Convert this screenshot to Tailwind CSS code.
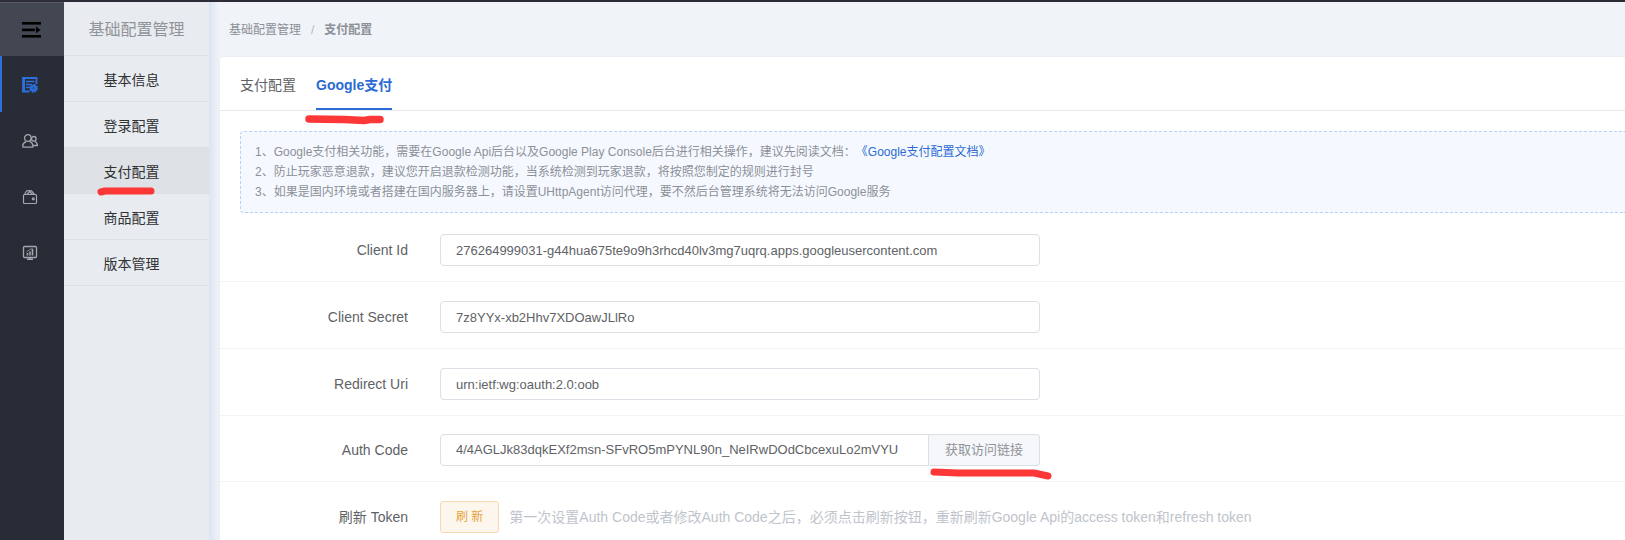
<!DOCTYPE html>
<html lang="zh-CN">
<head>
  <meta charset="UTF-8" />
  <meta name="viewport" content="width=device-width, initial-scale=1.0"/>
  <title>支付配置</title>
  <script src="https://cdn.jsdelivr.net/npm/@tailwindcss/browser@4"></script>
  <style>
    body {
      font-family: 'Liberation Sans', 'Noto Sans CJK SC', sans-serif;
      text-spacing-trim: space-all;
    }
  </style>
</head>
<body class="bg-[#f0f3f8] text-sm text-[#606266]">
  <div class="flex h-screen flex-col overflow-hidden">
    <div class="h-[2px] shrink-0 bg-[#2c2c38]"></div>

    <div class="flex min-h-0 flex-1">
      <!-- icon bar -->
      <nav class="flex w-16 shrink-0 flex-col bg-[#282c36]">
        <button type="button" aria-label="折叠菜单" class="flex h-[54px] items-center justify-center border-t border-[#565a66] bg-[#434751] text-black">
          <svg class="h-4 w-5" viewBox="0 0 20 16" fill="currentColor">
            <rect x="0" y="0" width="19" height="2.600"/>
            <rect x="0" y="6.600" width="13" height="2.600"/>
            <rect x="0" y="13" width="19" height="2.600"/>
            <path d="M14 4.500L18.500 7.900L14 11.300Z"/>
          </svg>
        </button>
        <a href="#" aria-label="基础配置管理" class="flex h-14 items-center justify-center border-l-2 border-[#2d6fdc] pt-0.5 pr-1.5 text-[#2d6fdc]">
          <svg class="h-4 w-4" viewBox="0 0 16 16" fill="none" stroke="currentColor">
            <path d="M14.500 7V1H1V14.500H7.500" stroke-width="1.800"/>
            <path d="M2 1V14.500" stroke-width="2"/>
            <path d="M4 4.500H12.500M4 7.500H9M4 10.500H7" stroke-width="1.500"/>
            <circle cx="11.500" cy="11.300" r="3.200" fill="currentColor" stroke-width="1"/>
            <circle cx="11.500" cy="11.300" r="3.900" stroke-width="1.400" stroke-dasharray="1.600 1.460"/>
            <circle cx="11.500" cy="11.300" r="1" stroke="#282c36" stroke-width=".4"/>
          </svg>
        </a>
        <a href="#" aria-label="用户管理" class="flex h-14 items-center justify-center pt-0.5 pr-1 text-[#a3a6ad]">
          <svg class="h-4 w-4" viewBox="0 0 16 16" fill="none" stroke="currentColor" stroke-width="1.300">
            <circle cx="5.800" cy="5" r="3.300"/>
            <path d="M.8 14.200V12.500C.8 10.500 2.500 9.300 4.300 8.400M7.600 8.400C9.400 9.300 10.800 10.500 10.800 12.500V14.200H.6"/>
            <circle cx="11.800" cy="5.800" r="2.300"/>
            <path d="M12.800 8.300C14.600 9 15.400 10.200 15.400 12.500H11"/>
          </svg>
        </a>
        <a href="#" aria-label="订单管理" class="flex h-14 items-center justify-center pt-0.5 pr-1 text-[#a3a6ad]">
          <svg class="h-4 w-4" viewBox="0 0 16 16" fill="none" stroke="currentColor" stroke-width="1.200">
            <rect x="1.500" y="5.500" width="13" height="9" rx="1"/>
            <path d="M2.500 5.500L4.500 2L7 1.500L9.500 1.800L12.500 5.500M5 5.500L7.500 2.500L10.500 5.500"/>
            <circle cx="11.300" cy="9.800" r="1"/>
          </svg>
        </a>
        <a href="#" aria-label="数据统计" class="flex h-14 items-center justify-center pt-0.5 pr-1 text-[#a3a6ad]">
          <svg class="h-4 w-4" viewBox="0 0 16 16" fill="none" stroke="currentColor" stroke-width="1.300">
            <rect x="1.500" y="1.500" width="13" height="11" rx="1"/>
            <path d="M5.500 10.500V8M8 10.500V6.500M10.500 10.500V4" stroke-width="1.600"/>
            <path d="M4.500 7L8.500 4H11" stroke-width=".8"/>
            <path d="M8 12.500V14M5 14.300H11" stroke-width="1.600"/>
          </svg>
        </a>
      </nav>

      <!-- sub menu -->
      <aside class="w-[145px] shrink-0 bg-[#e8ebef] text-center text-[#303133]">
        <h2 class="h-[54px] border-b border-[#dcdfe3] text-base leading-[56px] text-[#909399]">基础配置管理</h2>
        <a href="#" class="block h-[46px] border-b border-[#dcdfe3] pr-2.5 leading-[48px]">基本信息</a>
        <a href="#" class="block h-[46px] border-b border-[#dcdfe3] pr-2.5 leading-[48px]">登录配置</a>
        <a href="#" class="relative block h-[46px] border-b border-[#dcdfe3] bg-[#dee1e5] pr-2.5 leading-[48px]">
          支付配置
          <svg class="absolute top-[38px] left-8 h-3 w-16" viewBox="0 0 64 12" fill="none" stroke="#fc3737" stroke-width="7" stroke-linecap="round" stroke-linejoin="round">
            <path d="M5 6L9 5H55"/>
          </svg>
        </a>
        <a href="#" class="block h-[46px] border-b border-[#dcdfe3] pr-2.5 leading-[48px]">商品配置</a>
        <a href="#" class="block h-[46px] border-b border-[#dcdfe3] pr-2.5 leading-[48px]">版本管理</a>
      </aside>
      <div class="w-2.5 shrink-0 bg-linear-to-r from-[#dbe4f2] to-[#f0f3f8]"></div>

      <main class="flex min-w-0 flex-1 flex-col">
        <div class="flex h-[54px] shrink-0 items-center gap-2.5 pt-0.5 pl-2.5 text-xs text-[#8c9097]">
          <a href="#">基础配置管理</a>
          <span class="text-[#b4b8c0]">/</span>
          <span class="font-bold">支付配置</span>
        </div>

        <section class="flex-1 rounded-tl border-t border-l border-[#ebeef5] bg-white">
          <div class="flex h-[54px] gap-5 border-b border-[#e6e9f0] pl-5">
            <button type="button" class="h-[53px] border-b-2 border-transparent pt-1">支付配置</button>
            <button type="button" class="relative h-[53px] border-b-2 border-[#2b6bd3] pt-1 font-bold text-[#2b6bd3]">
              Google支付
              <svg class="absolute top-[55px] -left-3 h-4 w-20" viewBox="0 0 80 16" fill="none" stroke="#fc3737" stroke-width="7.500" stroke-linecap="round" stroke-linejoin="round">
                <path d="M5 7L40 7.500L60 8.500L66 7.500H76"/>
              </svg>
            </button>
          </div>

          <div class="mt-5 ml-5 rounded-l border border-r-0 border-dashed border-[#b3d4f8] bg-[#f5f9ff] py-2.5 pl-3.5 text-xs leading-5 whitespace-nowrap text-[#8c9097]">
            <p>1、Google支付相关功能，需要在Google Api后台以及Google Play Console后台进行相关操作，建议先阅读文档：<a href="#" class="text-[#2b6bd3]">《Google支付配置文档》</a></p>
            <p>2、防止玩家恶意退款，建议您开启退款检测功能，当系统检测到玩家退款，将按照您制定的规则进行封号</p>
            <p>3、如果是国内环境或者搭建在国内服务器上，请设置UHttpAgent访问代理，要不然后台管理系统将无法访问Google服务</p>
          </div>

          <form class="mt-0.5">
            <div class="flex items-center border-b border-[#f2f3f7] pt-[19px] pb-[15px]">
              <label for="clientId" class="w-[188px] text-right">Client Id</label>
              <input id="clientId" type="text" value="276264999031-g44hua675te9o9h3rhcd40lv3mg7uqrq.apps.googleusercontent.com" class="ml-8 h-8 w-[600px] rounded border border-[#dcdfe6] px-[15px] text-[13px] outline-none"/>
            </div>
            <div class="flex items-center border-b border-[#f2f3f7] pt-[19px] pb-[15px]">
              <label for="clientSecret" class="w-[188px] text-right">Client Secret</label>
              <input id="clientSecret" type="text" value="7z8YYx-xb2Hhv7XDOawJLlRo" class="ml-8 h-8 w-[600px] rounded border border-[#dcdfe6] px-[15px] text-[13px] outline-none"/>
            </div>
            <div class="flex items-center border-b border-[#f2f3f7] pt-[19px] pb-[15px]">
              <label for="redirectUri" class="w-[188px] text-right">Redirect Uri</label>
              <input id="redirectUri" type="text" value="urn:ietf:wg:oauth:2.0:oob" class="ml-8 h-8 w-[600px] rounded border border-[#dcdfe6] px-[15px] text-[13px] outline-none"/>
            </div>
            <div class="flex items-center border-b border-[#f2f3f7] pt-[18px] pb-[15px]">
              <label for="authCode" class="w-[188px] text-right">Auth Code</label>
              <div class="relative ml-8 flex h-8 w-[600px] text-[13px]">
                <input id="authCode" type="text" value="4/4AGLJk83dqkEXf2msn-SFvRO5mPYNL90n_NeIRwDOdCbcexuLo2mVYU" class="min-w-0 flex-1 rounded-l border border-[#dcdfe6] px-[15px] outline-none"/>
                <button type="button" class="rounded-r border border-l-0 border-[#dcdfe6] bg-[#f5f7fa] px-4 text-[#909399]">获取访问链接</button>
                <svg class="absolute top-8 left-[488px] h-4 w-32" viewBox="0 0 128 16" fill="none" stroke="#fc3737" stroke-width="7" stroke-linecap="round" stroke-linejoin="round">
                  <path d="M6 6L30 7H106L120 10"/>
                </svg>
              </div>
            </div>
            <div class="flex items-center pt-[19px] pb-[15px]">
              <label for="refreshToken" class="w-[188px] text-right">刷新 Token</label>
              <button id="refreshToken" type="button" class="ml-8 h-8 rounded-[3px] border border-[#f5dab1] bg-[#fdf6ec] px-[15px] text-xs text-[#e6a23c]">刷 新</button>
              <span class="ml-2.5 text-[#c0c4cc]">第一次设置Auth Code或者修改Auth Code之后，必须点击刷新按钮，重新刷新Google Api的access token和refresh token</span>
            </div>
          </form>
        </section>
      </main>
    </div>
  </div>
</body>
</html>
